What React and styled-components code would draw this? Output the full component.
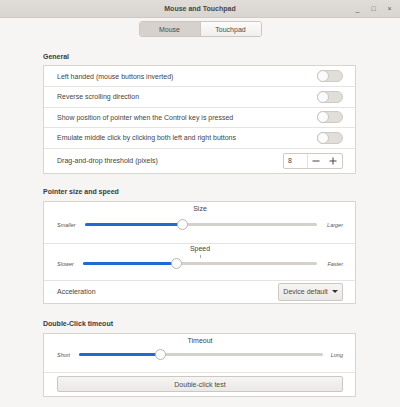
import React from 'react';
import styled, { createGlobalStyle } from 'styled-components';

const GlobalStyle = createGlobalStyle`
  html, body {
    margin: 0;
    padding: 0;
    background: #f6f5f4;
  }
  body {
    font-family: 'Liberation Sans', 'DejaVu Sans', sans-serif;
    color: #3d3d3d;
  }
`;

const Window = styled.div`
  width: 400px;
  height: 407px;
  background: #f6f5f4;
  display: flex;
  flex-direction: column;
  overflow: hidden;
`;

const TitleBar = styled.div`
  height: 18px;
  background: linear-gradient(#e0ddd9, #d8d4d0);
  border-bottom: 1px solid #cdc8c3;
  box-sizing: border-box;
  display: grid;
  grid-template-columns: 1fr auto 1fr;
  align-items: center;
  font-size: 7px;
  font-weight: bold;
  color: #464646;
  .title {
    grid-column: 2;
  }
`;

const Controls = styled.div`
  grid-column: 3;
  justify-self: end;
  display: flex;
  gap: 9px;
  padding-right: 7px;
  color: #555;
  font-weight: normal;
  span {
    width: 7px;
    text-align: center;
  }
`;

const Tabs = styled.div`
  align-self: center;
  margin-top: 3px;
  display: flex;
  border: 1px solid #cdc7c2;
  border-radius: 3px;
  overflow: hidden;
  height: 16px;
  box-sizing: border-box;
`;

const Tab = styled.div`
  width: 60px;
  display: flex;
  align-items: center;
  justify-content: center;
  font-size: 7px;
  color: #4a4a4a;
  background: ${(p) => (p.$active ? '#d6d1cd' : 'linear-gradient(#fbfbfa, #f1efed)')};
  & + & {
    border-left: 1px solid #cdc7c2;
  }
`;

const Content = styled.div`
  padding: 0 44px 0 43px;
  display: flex;
  flex-direction: column;
`;

const SectionLabel = styled.div`
  height: 18px;
  margin-top: ${(p) => p.$top}px;
  display: flex;
  align-items: center;
  font-size: 7px;
  font-weight: bold;
  color: #3a3a3a;
`;

const Panel = styled.div`
  background: #ffffff;
  border: 1px solid #d8d4d0;
  display: flex;
  flex-direction: column;
`;

const SliderBlock = styled.div`
  height: ${(p) => p.$h}px;
  box-sizing: border-box;
  padding: ${(p) => p.$pt}px 12px 0 13px;
  display: flex;
  flex-direction: column;
  & + & {
    border-top: 1px solid #e6e3e0;
  }
`;

const Row = styled.div`
  height: ${(p) => p.$h}px;
  box-sizing: border-box;
  display: flex;
  align-items: center;
  justify-content: space-between;
  padding: 0 12px 0 13px;
  font-size: 7px;
  color: #444;
  & + &,
  ${SliderBlock} + & {
    border-top: 1px solid #e6e3e0;
  }
`;

const Toggle = styled.div`
  width: 26px;
  height: 12px;
  border-radius: 6px;
  background: #e1deda;
  border: 1px solid #cfcac5;
  box-sizing: border-box;
  position: relative;
  &::after {
    content: '';
    position: absolute;
    left: -1px;
    top: -1px;
    width: 12px;
    height: 12px;
    border-radius: 50%;
    background: #fbfbfb;
    border: 1px solid #c9c4bf;
    box-sizing: border-box;
  }
`;

const Spin = styled.div`
  width: 60px;
  height: 16px;
  border: 1px solid #cfcac5;
  border-radius: 2px;
  box-sizing: border-box;
  display: grid;
  grid-template-columns: 23px 1fr 1fr;
  align-items: center;
  font-size: 7px;
  .value {
    padding-left: 4px;
  }
`;

const SpinBtn = styled.div`
  display: flex;
  align-items: center;
  justify-content: center;
  height: 14px;
  border-left: ${(p) => (p.$sep ? '1px solid #e3dfdb' : 'none')};
  svg {
    display: block;
  }
`;

const SliderTitle = styled.div`
  text-align: center;
  font-size: 7px;
  color: #444;
  height: 10px;
  line-height: 10px;
`;

const SliderRow = styled.div`
  display: flex;
  align-items: center;
  margin-top: ${(p) => p.$mt}px;
  height: 12px;
`;

const Side = styled.div`
  width: ${(p) => p.$w}px;
  font-size: 5.5px;
  font-style: italic;
  color: #555;
  text-align: ${(p) => p.$align};
  flex-shrink: 0;
`;

const Track = styled.div`
  flex: 1;
  height: 3px;
  border-radius: 2px;
  background: #d4d0cc;
  position: relative;
`;

const Fill = styled.div`
  height: 100%;
  border-radius: 2px;
  background: #1f6bd1;
`;

const Knob = styled.div`
  position: absolute;
  top: -4px;
  width: 11px;
  height: 11px;
  margin-left: -5.5px;
  border-radius: 50%;
  background: #fdfdfd;
  border: 1px solid #bdb7b1;
  box-sizing: border-box;
`;

const Tick = styled.div`
  position: absolute;
  left: 50%;
  top: -7px;
  width: 1px;
  height: 3px;
  background: #aaa;
`;

const Button = styled.div`
  height: ${(p) => p.$h || 16}px;
  box-sizing: border-box;
  border: 1px solid #cdc7c2;
  border-radius: 2px;
  background: linear-gradient(#f6f5f4, #ebe8e6);
  display: flex;
  align-items: center;
  justify-content: center;
  gap: 4px;
  font-size: 7px;
  color: #4a4a4a;
  padding: 0 5px;
  white-space: nowrap;
  width: ${(p) => p.$w || 'auto'};
  flex: ${(p) => (p.$grow ? 1 : 'none')};
`;

const Arrow = styled.span`
  width: 0;
  height: 0;
  border-left: 3px solid transparent;
  border-right: 3px solid transparent;
  border-top: 3.5px solid #333;
`;

function Slider({ left, right, lw, rw, pos, tick, mt }) {
  return (
    <SliderRow $mt={mt}>
      <Side $w={lw} $align="left">{left}</Side>
      <Track>
        <Fill style={{ width: `${pos}%` }} />
        {tick && <Tick />}
        <Knob style={{ left: `${pos}%` }} />
      </Track>
      <Side $w={rw} $align="right">{right}</Side>
    </SliderRow>
  );
}

const toggles = [
  'Left handed (mouse buttons inverted)',
  'Reverse scrolling direction',
  'Show position of pointer when the Control key is pressed',
  'Emulate middle click by clicking both left and right buttons',
];

export default function App() {
  return (
    <Window>
      <GlobalStyle />
      <TitleBar>
        <span className="title">Mouse and Touchpad</span>
        <Controls>
          <span>_</span>
          <span>□</span>
          <span>×</span>
        </Controls>
      </TitleBar>
      <Tabs>
        <Tab $active>Mouse</Tab>
        <Tab>Touchpad</Tab>
      </Tabs>
      <Content>
        <SectionLabel $top={10}>General</SectionLabel>
        <Panel>
          {toggles.map((t, i) => (
            <Row key={t} $h={i === 0 ? 20 : 20.5}>
              <span>{t}</span>
              <Toggle />
            </Row>
          ))}
          <Row $h={25}>
            <span>Drag-and-drop threshold (pixels)</span>
            <Spin>
              <span className="value">8</span>
              <SpinBtn $sep>
                <svg width="8" height="8" viewBox="0 0 8 8">
                  <path d="M0.5 4h7" stroke="#444" strokeWidth="1" />
                </svg>
              </SpinBtn>
              <SpinBtn>
                <svg width="8" height="8" viewBox="0 0 8 8">
                  <path d="M0.5 4h7M4 0.5v7" stroke="#444" strokeWidth="1" />
                </svg>
              </SpinBtn>
            </Spin>
          </Row>
        </Panel>

        <SectionLabel $top={9}>Pointer size and speed</SectionLabel>
        <Panel>
          <SliderBlock $h={41} $pt={2}>
            <SliderTitle>Size</SliderTitle>
            <Slider left="Smaller" right="Larger" lw={28} rw={26} pos={42} mt={5} />
          </SliderBlock>
          <SliderBlock $h={37} $pt={0}>
            <SliderTitle>Speed</SliderTitle>
            <Slider left="Slower" right="Faster" lw={26} rw={26} pos={40} tick mt={4} />
          </SliderBlock>
          <Row $h={23}>
            <span>Acceleration</span>
            <Button $w="65px" $h={18}>
              Device default <Arrow />
            </Button>
          </Row>
        </Panel>

        <SectionLabel $top={11}>Double-Click timeout</SectionLabel>
        <Panel>
          <SliderBlock $h={38} $pt={2}>
            <SliderTitle>Timeout</SliderTitle>
            <Slider left="Short" right="Long" lw={22} rw={20} pos={33.5} mt={3} />
          </SliderBlock>
          <Row $h={24}>
            <Button $grow>Double-click test</Button>
          </Row>
        </Panel>
      </Content>
    </Window>
  );
}
